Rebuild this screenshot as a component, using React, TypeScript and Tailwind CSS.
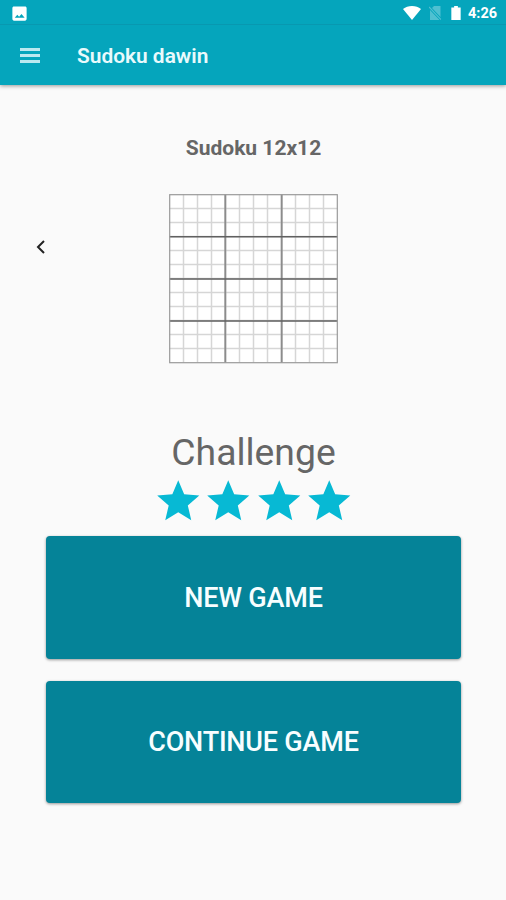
import { useState } from "react"

const levels = [1, 2, 3, 4]

const cells = Array.from({ length: 11 }, (_, i) => i + 1)

function StatusBar() {
  return (
    <div className="flex h-[25px] items-center justify-between border-b border-[#0898b0] pl-[10px] pr-[7px] text-white">
      <svg viewBox="0 0 24 24" className="mt-0.5 h-[19px] w-[19px]" fill="currentColor">
        <path d="M21 19V5c0-1.1-.9-2-2-2H5c-1.1 0-2 .9-2 2v14c0 1.1.9 2 2 2h14c1.1 0 2-.9 2-2zM6 17.5l3.2-4 2.3 2.6 3-3.6 4 5z" />
      </svg>
      <div className="flex items-center pt-[2px]">
        <svg viewBox="0 0 18 14" className="mr-[8px] h-[14px] w-[18px]" fill="currentColor">
          <path d="M9 14 0 3C2.5 1 5.5 0 9 0s6.5 1 9 3z" />
        </svg>
        <svg viewBox="0 0 12 14" className="mr-[10px] h-[14px] w-[12px]">
          <path d="M5 0h6.5v11L3 2zM1 4l9.5 10H1z" fill="#4fc0d1" />
          <path d="m0 1 12 12.5" stroke="#4fc0d1" strokeWidth="1.2" />
        </svg>
        <svg viewBox="0 0 10 15" className="mr-[7px] h-[14px] w-[10px]" fill="currentColor">
          <path d="M3 0h4v1.5h3V15H0V1.5h3z" />
        </svg>
        <span className="w-[31px] pt-[2px] text-[14.5px] font-bold leading-none">4:26</span>
      </div>
    </div>
  )
}

function Toolbar() {
  return (
    <div className="flex h-[60px] items-center text-[#e9fafc]">
      <button className="ml-[20px] flex w-[20px] flex-col gap-[3px]" aria-label="Menu">
        <span className="h-[3px] w-full bg-current opacity-80" />
        <span className="h-[3px] w-full bg-current opacity-80" />
        <span className="h-[3px] w-full bg-current opacity-80" />
      </button>
      <h1 className="ml-[37px] pt-0.5 text-[20.9px] font-semibold leading-none">Sudoku dawin</h1>
    </div>
  )
}

function Board() {
  return (
    <svg viewBox="0 0 170 170" className="h-[170px] w-[170px]" fill="none">
      <rect x=".5" y=".5" width="168" height="168" fill="#fff" />
      {cells.map((n) => (
        <g key={n} stroke="#d6d6d6" strokeWidth="1.5">
          <path d={`M${n * 14 + 0.5} .5v168`} />
          <path d={`M.5 ${n * 14 + 0.5}h168`} />
        </g>
      ))}
      <path d="M56.3 .5v168M112.7 .5v168" stroke="#8c8c8c" strokeWidth="1.9" />
      <path d="M.5 42.7h168M.5 84.9h168M.5 127h168" stroke="#606060" strokeWidth="1.5" />
      <rect x=".7" y=".7" width="167.6" height="168" stroke="#999" strokeWidth="1.2" />
    </svg>
  )
}

function GameButton({ label }: { label: string }) {
  return (
    <button className="h-[122.5px] w-[415px] rounded-[4px] bg-[#058398] pl-px pt-[1px] text-[27px] font-medium tracking-[-0.2px] text-[#f8feff] shadow-[0_1px_3px_rgba(0,0,0,0.4)]">
      {label}
    </button>
  )
}

export default function App() {
  const [difficulty] = useState(4)

  return (
    <div className="flex h-[900px] w-[506px] flex-col overflow-hidden bg-[#fafafa] font-['Roboto',sans-serif]">
      <header className="h-[85px] shrink-0 bg-[#05a5bc] shadow-[0_1px_4px_rgba(0,0,0,0.4)]">
        <StatusBar />
        <Toolbar />
      </header>

      <main className="flex flex-col items-center">
        <h2 className="mt-[51px] pl-px text-[21px] font-bold leading-[24px] text-[#666]">Sudoku 12x12</h2>

        {/* Size picker */}
        <div className="mt-[34px] grid w-full grid-cols-[169px_170px_1fr]">
          <button className="mt-[44px] h-[18px] pl-[36px]" aria-label="Previous">
            <svg viewBox="0 0 10 16" className="h-[16px] w-[10px]" fill="none" stroke="#222" strokeWidth="2">
              <path d="M8 2 2 8l6 6" />
            </svg>
          </button>
          <Board />
        </div>

        {/* Difficulty */}
        <div className="mt-[64px] pl-px text-[37.3px] leading-[48px] text-[#666]">Challenge</div>
        <div className="flex pl-px">
          {levels.slice(0, difficulty).map((n) => (
            <svg key={n} viewBox="0 0 24 24" className="h-[50.5px] w-[50.5px]" fill="#07b9d4">
              <path d="M12 17.27 18.18 21l-1.64-7.03L22 9.24l-7.19-.61L12 2 9.19 8.63 2 9.24l5.46 4.73L5.82 21z" />
            </svg>
          ))}
        </div>

        <div className="mt-[9.5px] flex flex-col gap-[22px]">
          <GameButton label="NEW GAME" />
          <GameButton label="CONTINUE GAME" />
        </div>
      </main>
    </div>
  )
}
